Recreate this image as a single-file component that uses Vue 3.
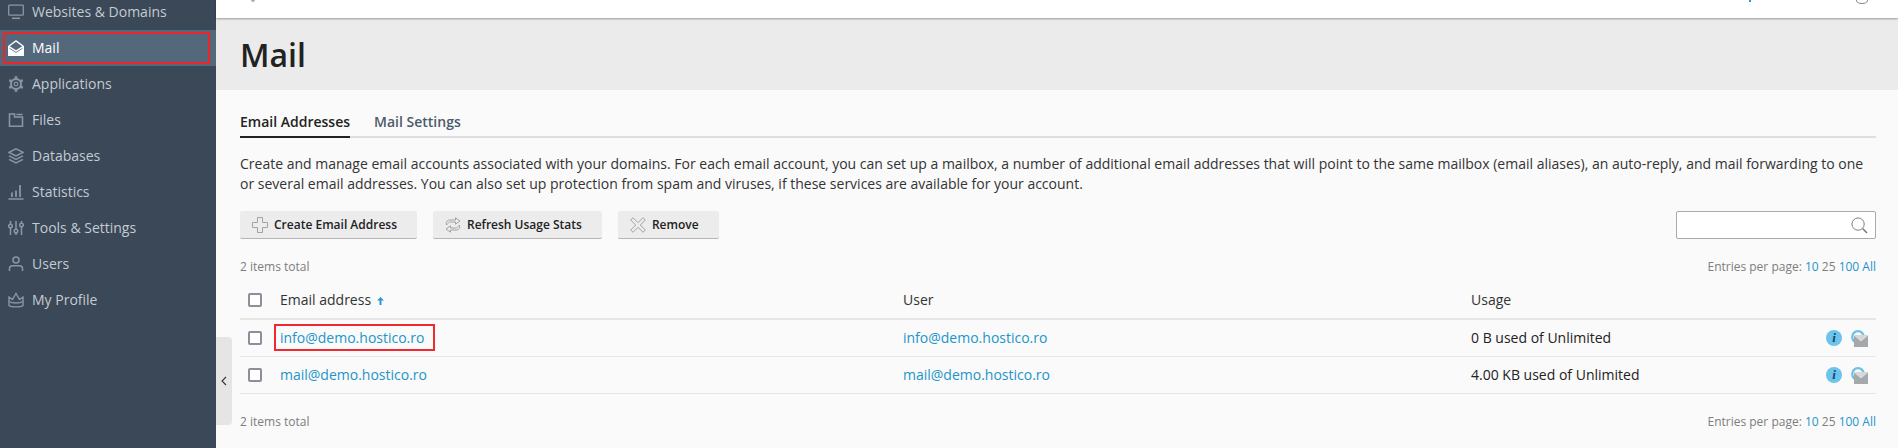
<script setup>
const nav = [
  { label: 'Websites & Domains', icon: 'monitor' },
  { label: 'Mail', icon: 'mail', active: true },
  { label: 'Applications', icon: 'gear' },
  { label: 'Files', icon: 'folder' },
  { label: 'Databases', icon: 'layers' },
  { label: 'Statistics', icon: 'chart' },
  { label: 'Tools & Settings', icon: 'sliders' },
  { label: 'Users', icon: 'user' },
  { label: 'My Profile', icon: 'crown' }
]
const rows = [
  { email: 'info@demo.hostico.ro', usage: '0 B used of Unlimited', marked: true },
  { email: 'mail@demo.hostico.ro', usage: '4.00 KB used of Unlimited' }
]
</script>

<template>
  <div class="page">
    <aside class="sidebar">
      <a v-for="item in nav" :key="item.label" class="nav-item" :class="{ active: item.active }">
        <svg class="nav-icon" viewBox="0 0 16 16" fill="none" stroke="currentColor" stroke-width="1.3">
          <template v-if="item.icon === 'monitor'">
            <rect x="0.7" y="1.2" width="14.6" height="10" rx="0.6" />
            <path d="M4 14.3h8" stroke-width="1.6" />
          </template>
          <template v-else-if="item.icon === 'mail'">
            <path d="M0 6 8 0l8 6v10H0Z" fill="#fff" stroke="none" />
            <path d="M1.800 6.200 8 1.800l6.200 4.400L8 10.300Z" fill="#54687c" stroke="none" />
            <path d="M1.500 8.200 8 12.500l6.500-4.300" stroke="#54687c" stroke-width="0.8" />
          </template>
          <template v-else-if="item.icon === 'gear'">
            <circle cx="8" cy="8" r="5" stroke-width="2" />
            <circle cx="8" cy="8" r="1.800" stroke-width="1.200" />
            <path d="M8 .3v2.400M8 13.300v2.400M1.300 4.100l2.100 1.200M12.600 10.700l2.100 1.200M1.300 11.900l2.100-1.200M12.600 5.300l2.100-1.200" stroke-width="2.600" />
          </template>
          <template v-else-if="item.icon === 'folder'">
            <path d="M1.500 2h5v3h8v9.300h-13zM8.500 2.500h6" stroke-width="1.600" />
          </template>
          <template v-else-if="item.icon === 'layers'">
            <path d="M8 .8 15 4.300 8 7.800 1 4.300Z" stroke-width="1.500" />
            <path d="M1 7.800l7 3.500 7-3.500M1 11.300l7 3.500 7-3.500" stroke-width="1.500" />
          </template>
          <template v-else-if="item.icon === 'chart'">
            <path d="M0.500 15h15" stroke-width="1.500" />
            <path d="M4 8.500V13M8 6.500V13M12 1V13" stroke-width="1.800" />
          </template>
          <template v-else-if="item.icon === 'sliders'">
            <path d="M2.500 1v3M2.500 8v7M8 1v8M8 13v2M13.500 1v2M13.500 7v8" stroke-width="1.500" />
            <circle cx="2.500" cy="6" r="1.800" stroke-width="1.500" />
            <circle cx="8" cy="11" r="1.800" stroke-width="1.500" />
            <circle cx="13.500" cy="5" r="1.800" stroke-width="1.500" />
          </template>
          <template v-else-if="item.icon === 'user'">
            <circle cx="8" cy="4" r="3" stroke-width="1.500" />
            <path d="M1.500 15v-2.500c0-1.800 1.500-2.800 3-2.800h7c1.500 0 3 1 3 2.800V15" stroke-width="1.500" />
          </template>
          <template v-else>
            <path d="M1 5 4.500 7.500 8 1.500l3.500 6L15 5v8.500c-2 1.800-12 1.800-14 0Z" stroke-width="1.400" />
            <path d="M1 9.500c3 2 11 2 14 0" stroke-width="1.400" />
          </template>
        </svg>
        <span>{{ item.label }}</span>
        <i v-if="item.active" class="mark mark-nav"></i>
      </a>
      <button class="collapse" type="button" aria-label="Collapse">
        <svg width="6" height="10" viewBox="0 0 6 10" fill="none" stroke="#333" stroke-width="1.100"><path d="M5 1 1 5l4 4" /></svg>
      </button>
    </aside>

    <main class="main">
      <header class="topbar">
        <i class="peek peek-left"></i>
        <i class="peek peek-blue"></i>
        <i class="peek peek-round"></i>
      </header>

      <div class="title-band"><h1>Mail</h1></div>

      <div class="content">
        <nav class="tabs">
          <a class="tab current">Email Addresses</a>
          <a class="tab">Mail Settings</a>
        </nav>

        <p class="intro">Create and manage email accounts associated with your domains. For each email account, you can set up a mailbox, a number of additional email addresses that will point to the same mailbox (email aliases), an auto-reply, and mail forwarding to one or several email addresses. You can also set up protection from spam and viruses, if these services are available for your account.</p>

        <div class="toolbar">
          <button class="btn" type="button">
            <svg viewBox="0 0 16 16" fill="none" stroke="#a3a3a3" stroke-width="1"><path d="M5.500 .5h5v5h5v5h-5v5h-5v-5h-5v-5h5z" /></svg>
            Create Email Address
          </button>
          <button class="btn" type="button">
            <svg viewBox="0 0 16 16" fill="none" stroke="#a3a3a3" stroke-width="1"><path d="M1.500 8C.5 4.500 2.500 3 5 3h5.500V.8L15 4l-4.500 3.200V5H5.500C4 5 3 6 1.500 8ZM14.500 8c1 3.500-1 5-3.500 5H5.500v2.200L1 12l4.500-3.200V11H10.500C12 11 13 10 14.500 8Z" /></svg>
            Refresh Usage Stats
          </button>
          <button class="btn" type="button">
            <svg viewBox="0 0 16 16" fill="none" stroke="#a3a3a3" stroke-width="1"><path d="M3 .7 8 5.700 13 .7 15.300 3l-5 5 5 5-2.300 2.300-5-5-5 5L.7 13l5-5-5-5Z" /></svg>
            Remove
          </button>
          <div class="search">
            <svg viewBox="0 0 18 18" fill="none" stroke="#777"><circle cx="7.500" cy="7.500" r="6.500" /><path d="m12.500 12.500 4.500 4.500" stroke-width="1.600" /></svg>
          </div>
        </div>

        <div class="meta meta-top">
          <span>2 items total</span>
          <span>Entries per page: <a>10</a> 25 <a>100</a> <a>All</a></span>
        </div>

        <div class="list">
          <div class="row head">
            <span class="box"></span>
            <span class="head-email">Email address
              <svg class="sort" viewBox="0 0 7 8" fill="#2e97c9"><path d="M3.500 0 7 3.500H4.500V8h-2V3.500H0Z" /></svg>
            </span>
            <span>User</span>
            <span>Usage</span>
            <span></span>
          </div>
          <div v-for="row in rows" :key="row.email" class="row">
            <span class="box"></span>
            <span class="email-cell"><a>{{ row.email }}</a><i v-if="row.marked" class="mark mark-link"></i></span>
            <span><a>{{ row.email }}</a></span>
            <span>{{ row.usage }}</span>
            <span class="actions">
              <span class="info">i</span>
              <svg class="webmail" viewBox="0 0 17 17">
                <circle cx="7" cy="7" r="5.800" fill="none" stroke="#6dbfe6" stroke-width="2.200" />
                <rect x="3" y="5" width="14" height="12" fill="#a5a9ac" />
                <path d="m3 5 7 6 7-6" fill="#d5d7d8" stroke="#e6e8e9" stroke-width="0.800" />
              </svg>
            </span>
          </div>
        </div>

        <div class="meta meta-bottom">
          <span>2 items total</span>
          <span>Entries per page: <a>10</a> 25 <a>100</a> <a>All</a></span>
        </div>
      </div>
    </main>
  </div>
</template>

<style>
html, body { margin: 0; background: #fafafa; overflow: hidden; }
</style>

<style scoped>
.page {
  display: flex;
  width: 1898px;
  height: 448px;
  overflow: hidden;
  font: 14px/20px "Open Sans", "Noto Sans", sans-serif;
  color: #222;
}
.sidebar {
  position: relative;
  flex: 0 0 216px;
  margin-top: -6px;
  background: #3a4858;
  height: 454px;
}
.nav-item {
  position: relative;
  display: flex;
  align-items: center;
  gap: 8px;
  height: 36px;
  padding-left: 8px;
  color: #c4cbd2;
}
.nav-icon { width: 16px; height: 16px; flex: none; color: #8b96a2; }
.nav-item.active { background: #54687c; color: #fff; }
.nav-item.active .nav-icon { color: #fff; }
.mark { position: absolute; box-sizing: border-box; border: 2px solid #e8262c; pointer-events: none; }
.mark-nav { left: 3px; top: 2px; width: 207px; height: 32px; }
.collapse {
  position: absolute;
  left: 216px;
  top: 343px;
  width: 16px;
  height: 88px;
  padding: 0;
  border: 0;
  border-radius: 0 4px 4px 0;
  background: #e5e5e5;
  display: flex;
  align-items: center;
  justify-content: center;
}
.main { flex: 1; min-width: 0; }
.topbar {
  position: relative;
  height: 18px;
  background: #fff;
  box-shadow: 0 1px 2px rgba(0, 0, 0, .35);
  z-index: 1;
  overflow: hidden;
}
.peek { position: absolute; top: -3px; }
.peek-left { left: 35px; width: 4px; height: 5px; border-radius: 50%; background: #aaa; }
.peek-blue { left: 1533px; width: 2px; height: 5px; background: #2a9bd6; }
.peek-round { left: 1640px; width: 10px; height: 5px; border: 1px solid #888; border-radius: 50%; }
.title-band {
  height: 72px;
  box-sizing: border-box;
  padding: 17px 24px 0;
  background: #ebebeb;
}
h1 { margin: 0; font-size: 32px; line-height: 40px; font-weight: 600; color: #222; }
.content { padding: 21px 22px 0 24px; }
.tabs {
  display: flex;
  gap: 24px;
  height: 25px;
  border-bottom: 2px solid #dedede;
}
.tab { height: 25px; line-height: 22px; font-weight: 600; color: #4d5a6a; }
.tab.current { color: #222; border-bottom: 2px solid #222; }
.intro { margin: 16px 0 0; line-height: 20px; color: #333; }
.toolbar { display: flex; align-items: flex-start; gap: 16px; margin-top: 17px; }
.btn {
  display: flex;
  align-items: center;
  gap: 6px;
  height: 28px;
  box-sizing: border-box;
  padding: 0 20px 0 12px;
  border: 0;
  border-bottom: 1px solid #b5b5b5;
  border-radius: 2px;
  background: #ececec;
  font: 600 12px/20px "Open Sans", "Noto Sans", sans-serif;
  color: #222;
}
.btn svg { width: 16px; height: 16px; flex: none; }
.search {
  margin-left: auto;
  width: 200px;
  height: 28px;
  box-sizing: border-box;
  border: 1px solid #aaa;
  border-radius: 2px;
  background: #fff;
  display: flex;
  align-items: center;
  justify-content: flex-end;
  padding-right: 7px;
}
.search svg { width: 17px; height: 17px; }
.meta {
  display: flex;
  justify-content: space-between;
  font-size: 12px;
  line-height: 20px;
  color: #7d7d7d;
}
.meta a, .row a { color: #2195c9; }
.meta-top { margin-top: 18px; }
.meta-bottom { margin-top: 18px; }
.list { margin-top: 7px; }
.row {
  display: grid;
  grid-template-columns: 40px 623px 568px 1fr 60px;
  align-items: center;
  height: 37px;
  box-sizing: border-box;
  border-bottom: 1px solid #e6e6e6;
  color: #222;
}
.row.head { height: 36px; padding-bottom: 3px; border-bottom: 2px solid #e6e6e6; color: #333; }
.box {
  margin-left: 8px;
  width: 14px;
  height: 14px;
  box-sizing: border-box;
  border: 2px solid #8d8d9b;
  border-radius: 2px;
  background: #fff;
}
.sort { width: 7px; height: 8px; margin-left: 2px; }
.email-cell { position: relative; }
.mark-link { left: -6px; top: -4px; width: 161px; height: 27px; border-color: #ee2a30; }
.actions { display: flex; justify-content: flex-end; align-items: center; gap: 9px; padding-right: 8px; }
.info {
  width: 16px;
  height: 16px;
  border-radius: 50%;
  background: #6cc4ec;
  color: #12476b;
  font: italic 700 13px/16px "Liberation Serif", serif;
  text-align: center;
}
.webmail { width: 17px; height: 17px; }
</style>
